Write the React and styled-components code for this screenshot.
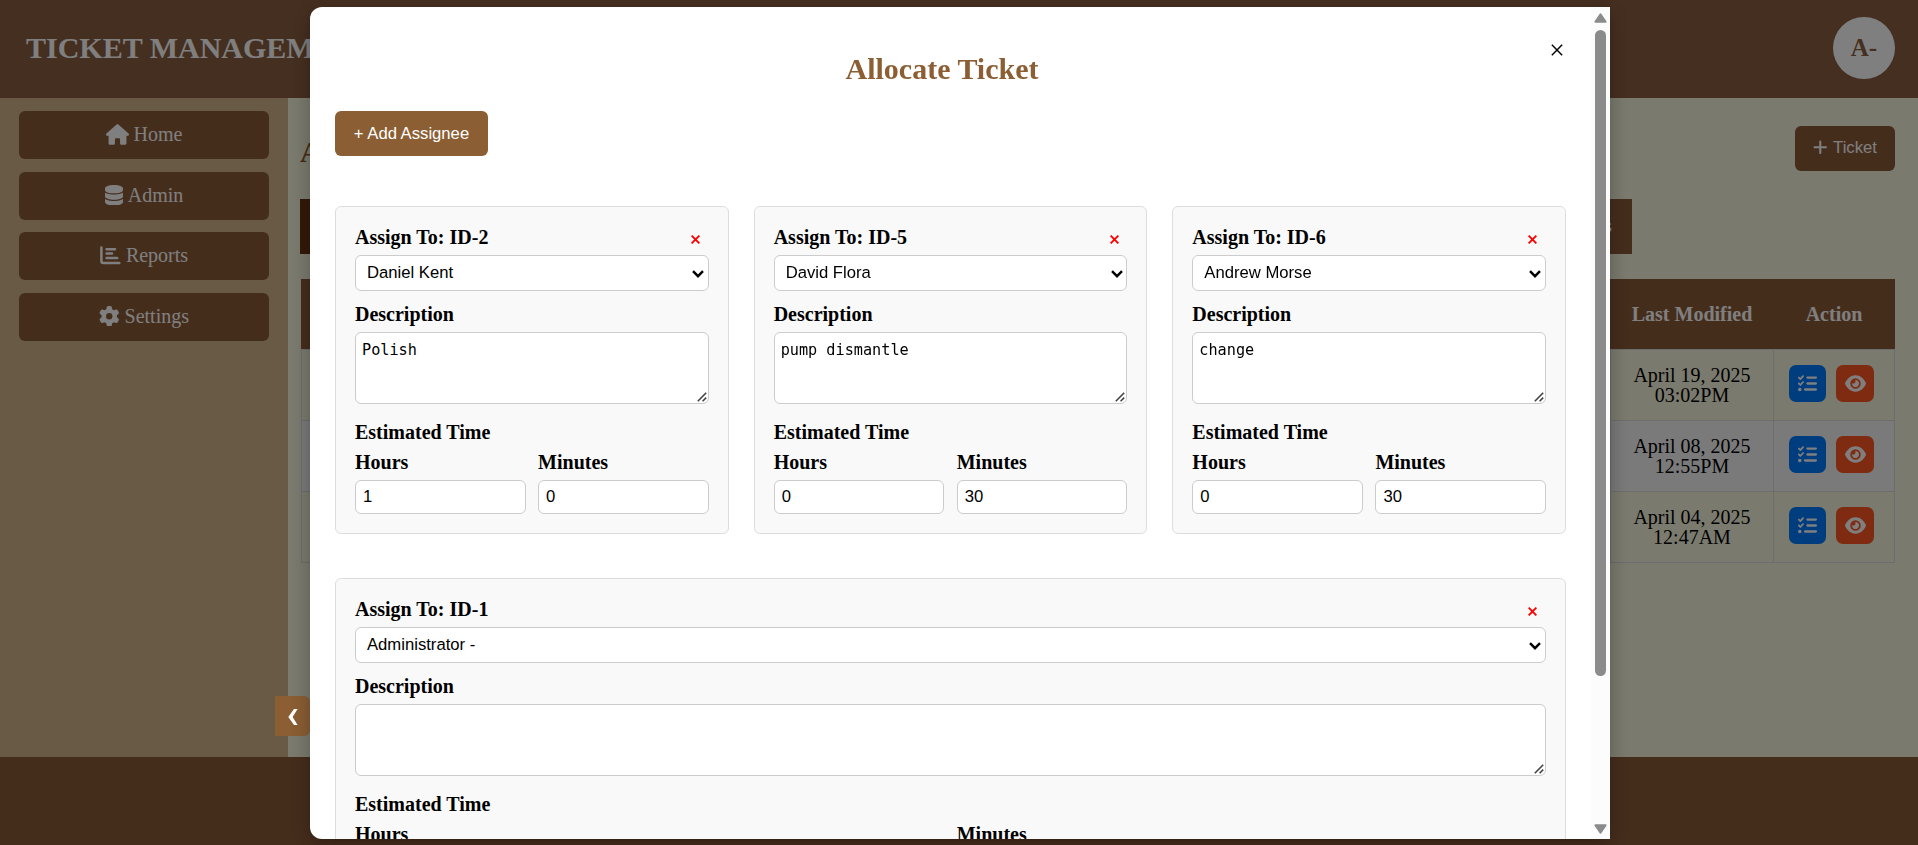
import React from "react";
import styled, { createGlobalStyle } from "styled-components";
import { FaPlus, FaEye, FaHouse, FaDatabase, FaGear, FaListCheck } from "react-icons/fa6";

const GlobalStyle = createGlobalStyle`
  * { box-sizing: border-box; }
  body { margin: 0; overflow: hidden; font-family: "Liberation Serif", serif; font-size: 20px; color: #000; }
  button, input, select { font-family: "Liberation Sans", sans-serif; font-size: 16.67px; }
`;

const Page = styled.div`
  height: 845px;
  display: flex;
  flex-direction: column;
  overflow: hidden;
`;

const Header = styled.header`
  height: 98px;
  flex: none;
  display: flex;
  align-items: center;
  justify-content: space-between;
  padding: 0 23px 2px 26px;
  background: #8b5e40;
`;

const Brand = styled.h1`
  margin: 0;
  font-size: 30px;
  color: #fff;
  white-space: nowrap;
`;

const Avatar = styled.div`
  width: 62px;
  height: 62px;
  border-radius: 50%;
  background: #fff;
  color: #8b5e3c;
  font-size: 25px;
  font-weight: bold;
  display: flex;
  align-items: center;
  justify-content: center;
`;

const Body = styled.div`
  flex: 1;
  display: flex;
  min-height: 0;
`;

const Sidebar = styled.nav`
  width: 288px;
  flex: none;
  background: #d2b48c;
  padding: 13px 19px;
  display: flex;
  flex-direction: column;
  gap: 12.5px;
`;

const NavButton = styled.a`
  height: 48px;
  border-radius: 6px;
  background: #8b5a38;
  color: #fff;
  display: flex;
  align-items: center;
  justify-content: center;
  gap: 5px;
  padding: 0 0 1px 0;
  svg {
    flex: none;
    width: ${(p) => p.$iconWidth}px;
    height: ${(p) => p.$iconHeight}px;
  }
`;

const Main = styled.main`
  flex: 1;
  min-width: 0;
  background: #f5f5dc;
  padding: 28px 23px 0 12px;
`;

const MainTop = styled.div`
  display: flex;
  justify-content: space-between;
  height: 73px;
`;

const PageTitle = styled.h2`
  margin: 0;
  padding-top: 9px;
  font-size: 30px;
  font-weight: bold;
  color: #8b5a2b;
`;

const TicketButton = styled.button`
  width: 100px;
  height: 45px;
  border: 0;
  border-radius: 6px;
  background: #8b5a38;
  color: #fff;
  display: flex;
  align-items: center;
  justify-content: center;
  gap: 4.5px;
  padding: 0 1px 2px 0;
`;

const Tabs = styled.div`
  display: flex;
  width: 1332px;
  height: 55px;
`;

const Tab = styled.div`
  flex: 1;
  display: flex;
  align-items: center;
  justify-content: flex-end;
  padding: 0 20px 0;
  font-size: 18px;
  color: #fff;
  background: ${(p) => (p.$active ? "#66330f" : "#8b5a38")};
`;

const Table = styled.div`
  margin: 25px 0 0 1px;
`;

const Row = styled.div`
  display: grid;
  grid-template-columns: 1fr 163px 121px;
  height: ${(p) => (p.$head ? "70px" : "71px")};
  background: ${(p) => (p.$head ? "#8b5a38" : p.$alt ? "#f5f4f6" : "#f5f5dc")};
  border: solid ${(p) => (p.$head ? "transparent" : "#dcdadc")};
  border-width: ${(p) => (p.$head ? "0" : "1px 1px 0 1px")};
  &:last-child { border-bottom-width: 1px; height: 72px; }
`;

const Cell = styled.div`
  display: flex;
  align-items: center;
  justify-content: center;
  text-align: center;
  line-height: 20px;
  padding: ${(p) => (p.$head ? "0 2px 0 0" : "0")};
  font-weight: ${(p) => (p.$head ? "bold" : "normal")};
  color: ${(p) => (p.$head ? "#fff" : "#000")};
  border-left: 1px solid ${(p) => (p.$head ? "transparent" : "#dcdadc")};
  &:first-child { border-left: 0; }
`;

const Stamp = styled.div`
  width: 130px;
`;

const ActionButton = styled.span`
  width: ${(p) => p.$width}px;
  height: 37px;
  border-radius: 7px;
  background: ${(p) => p.$color};
  color: #fff;
  display: flex;
  align-items: center;
  justify-content: center;
`;

const ActionGroup = styled.div`
  display: flex;
  gap: 10px;
  padding: 0 5px 3px 0;
`;

const Footer = styled.footer`
  height: 88px;
  flex: none;
  background: #8b5a38;
`;

const Overlay = styled.div`
  position: fixed;
  inset: 0;
  background: rgba(0, 0, 0, 0.5);
  display: flex;
  align-items: center;
  justify-content: center;
  padding: 1px 0 0 2px;
`;

const Collapse = styled.button`
  position: fixed;
  left: 275px;
  top: 696px;
  width: 35px;
  height: 40px;
  border: 0;
  border-radius: 0 6px 6px 0;
  background: #8b5e34;
  display: flex;
  align-items: center;
  justify-content: center;
  padding: 2px 0 0 1px;
`;

const Modal = styled.section`
  position: relative;
  width: 1300px;
  height: 832px;
  border-radius: 12px 0 0 12px;
  background: #fff;
  overflow: hidden;
  display: flex;
`;

const ModalShadow = styled.div`
  position: relative;
  border-radius: 12px 0 0 12px;
  box-shadow: 0 5px 19px rgba(0, 0, 0, 0.3);
`;

const ModalContent = styled.div`
  width: 1281px;
  flex: none;
  padding: 25px 25px 0;
  overflow: hidden;
`;

const ModalHeader = styled.div`
  display: flex;
  height: 79px;
  align-items: flex-start;
`;

const ModalTitle = styled.h2`
  flex: 1;
  margin: 0;
  padding-top: 20px;
  font-size: 30px;
  line-height: 34px;
  text-align: center;
  color: #8b5e34;
`;

const CloseButton = styled.button`
  display: flex;
  width: 17px;
  height: 34px;
  padding: 12px 0 0 2px;
  border: 0;
  background: none;
`;

const AddButton = styled.button`
  width: 153px;
  height: 45px;
  padding: 0 0 0;
  border: 0;
  border-radius: 6px;
  background: #8b5e34;
  color: #fff;
`;

const Cards = styled.div`
  display: grid;
  grid-template-columns: repeat(3, 1fr);
  gap: 44.25px 25px;
  margin-top: 50px;
`;

const Card = styled.article`
  grid-column: ${(p) => (p.$wide ? "1 / -1" : "auto")};
  height: 327.75px;
  min-width: 0;
  padding: 19px;
  border: 1px solid #ddd;
  border-radius: 6px;
  background: #f9f9f9;
`;

const CardTop = styled.div`
  display: flex;
  justify-content: space-between;
`;

const Label = styled.div`
  height: 23px;
  line-height: 23px;
  font-weight: bold;
  margin-bottom: 6.25px;
`;

const RemoveButton = styled.button`
  display: flex;
  width: 9px;
  height: 23px;
  margin-right: 8.5px;
  padding: 9px 0 0;
  border: 0;
  background: none;
`;

const Control = styled.div`
  position: relative;
  margin-bottom: ${(p) => p.$after || 0}px;
`;

const frame = `
  display: block;
  width: 100%;
  margin: 0;
  border: 1px solid #ccc;
  border-radius: 6px;
  background: #fff;
  color: #000;
  outline: 0;
`;

const Select = styled.select`
  ${frame}
  appearance: none;
  height: 35.5px;
  padding: 0 30px 2px 11px;
`;

const TextArea = styled.textarea`
  ${frame}
  height: 71.5px;
  padding: 7px 6px 6px;
  resize: none;
  overflow: hidden;
  font: 15.2px/20px "DejaVu Sans Mono", monospace;
`;

const Input = styled.input`
  ${frame}
  height: 33.75px;
  padding: 0 7px;
`;

const Chevron = styled.svg`
  position: absolute;
  right: 4.5px;
  top: 14.5px;
  pointer-events: none;
`;

const Grip = styled.svg`
  position: absolute;
  right: 2px;
  bottom: 2px;
  pointer-events: none;
`;

const Times = styled.div`
  display: grid;
  grid-template-columns: 1fr 1fr;
  gap: 12.5px;
`;

const ScrollBar = styled.div`
  width: 19px;
  flex: none;
  background: #fcfcfc;
  display: flex;
  flex-direction: column;
  align-items: center;
  padding: 6px 0 5px;
`;

const Thumb = styled.div`
  width: 11px;
  height: 646px;
  margin: 7px 0 auto;
  border-radius: 6px;
  background: #8b8b8b;
`;

const nav = [
  { name: "Home", Icon: FaHouse, width: 23, height: 21 },
  { name: "Admin", Icon: FaDatabase, width: 18, height: 20.5 },
  { name: "Reports", Icon: ReportIcon, width: 21, height: 19 },
  { name: "Settings", Icon: FaGear, width: 20.5, height: 20.5 },
];

const rows = [
  ["April 19, 2025", "03:02PM"],
  ["April 08, 2025", "12:55PM"],
  ["April 04, 2025", "12:47AM"],
];

const assignees = [
  { id: 2, name: "Daniel Kent", text: "Polish", hours: "1", minutes: "0" },
  { id: 5, name: "David Flora", text: "pump dismantle", hours: "0", minutes: "30" },
  { id: 6, name: "Andrew Morse", text: "change", hours: "0", minutes: "30" },
  { id: 1, name: "Administrator -", text: "", hours: "0", minutes: "0", wide: true },
];

function ReportIcon() {
  return (
    <svg viewBox="0 0 21 19" fill="none" stroke="currentColor" strokeWidth="2.5" strokeLinecap="round">
      <path d="M1.4 1.4V15a2 2 0 0 0 2 2H19.3M6.6 3.2H15M6.6 7.5H12M6.6 12H17.2" />
    </svg>
  );
}

function Cross({ size, color, width }) {
  return (
    <svg width={size} height={size} viewBox="0 0 10 10" stroke={color} strokeWidth={width}>
      <path d="M.7 .7L9.3 9.3M9.3 .7L.7 9.3" />
    </svg>
  );
}

function Arrow({ down }) {
  return (
    <svg width="13" height="10" viewBox="0 0 13 10" fill="#8b8b8b" stroke="#8b8b8b" strokeWidth="2" strokeLinejoin="round">
      <path d={down ? "M1.4 1.2H11.6L6.5 8.6Z" : "M1.4 8.8H11.6L6.5 1.4Z"} />
    </svg>
  );
}

function AssigneeCard({ a }) {
  return (
    <Card $wide={a.wide}>
      <CardTop>
        <Label>Assign To: ID-{a.id}</Label>
        <RemoveButton aria-label="Remove"><Cross size={9} color="#f00" width={2.1} /></RemoveButton>
      </CardTop>
      <Control $after={12.25}>
        <Select defaultValue={a.name}><option>{a.name}</option></Select>
        <Chevron width="12" height="8" viewBox="0 0 12 8" fill="none" stroke="#000" strokeWidth="2.4">
          <path d="M1 1.2L6 6.2L11 1.2" />
        </Chevron>
      </Control>
      <Label>Description</Label>
      <Control $after={17.5}>
        <TextArea defaultValue={a.text} spellCheck={false} />
        <Grip width="10" height="10" viewBox="0 0 10 10" stroke="#444" strokeWidth="1.6">
          <path d="M.8 9.2L9.2 .8M5.6 9.2L9.2 5.6" />
        </Grip>
      </Control>
      <Label>Estimated Time</Label>
      <Times>
        <div><Label>Hours</Label><Input defaultValue={a.hours} /></div>
        <div><Label>Minutes</Label><Input defaultValue={a.minutes} /></div>
      </Times>
    </Card>
  );
}

export default function App() {
  return (
    <>
      <GlobalStyle />
      <Page>
        <Header>
          <Brand>TICKET MANAGEMENT</Brand>
          <Avatar>A-</Avatar>
        </Header>
        <Body>
          <Sidebar>
            {nav.map(({ name, Icon, width, height }) => (
              <NavButton key={name} $iconWidth={width} $iconHeight={height}>
                <Icon />
                {name}
              </NavButton>
            ))}
          </Sidebar>
          <Main>
            <MainTop>
              <PageTitle>All Tickets</PageTitle>
              <TicketButton><FaPlus size={16.5} />Ticket</TicketButton>
            </MainTop>
            <Tabs>
              <Tab $active />
              <Tab>Tickets</Tab>
            </Tabs>
            <Table>
              <Row $head>
                <Cell $head />
                <Cell $head>Last Modified</Cell>
                <Cell $head>Action</Cell>
              </Row>
              {rows.map(([date, time], i) => (
                <Row key={date} $alt={i === 1}>
                  <Cell />
                  <Cell><Stamp>{date}<br />{time}</Stamp></Cell>
                  <Cell>
                    <ActionGroup>
                      <ActionButton $color="#007bff" $width={37}><FaListCheck size={19} /></ActionButton>
                      <ActionButton $color="#ff5722" $width={38}><FaEye size={21} /></ActionButton>
                    </ActionGroup>
                  </Cell>
                </Row>
              ))}
            </Table>
          </Main>
        </Body>
        <Footer />
      </Page>
      <Overlay>
        <Collapse aria-label="Collapse sidebar">
          <svg width="10" height="16" viewBox="0 0 10 16" fill="#fff">
            <path d="M6 0H9.6L4.6 8L9.6 16H6L.3 8Z" />
          </svg>
        </Collapse>
        <ModalShadow>
          <Modal>
            <ModalContent>
              <ModalHeader>
                <ModalTitle>Allocate Ticket</ModalTitle>
                <CloseButton aria-label="Close"><Cross size={12} color="#000" width={1.2} /></CloseButton>
              </ModalHeader>
              <AddButton>+ Add Assignee</AddButton>
              <Cards>
                {assignees.map((a) => <AssigneeCard key={a.id} a={a} />)}
              </Cards>
            </ModalContent>
            <ScrollBar>
              <Arrow />
              <Thumb />
              <Arrow down />
            </ScrollBar>
          </Modal>
        </ModalShadow>
      </Overlay>
    </>
  );
}
